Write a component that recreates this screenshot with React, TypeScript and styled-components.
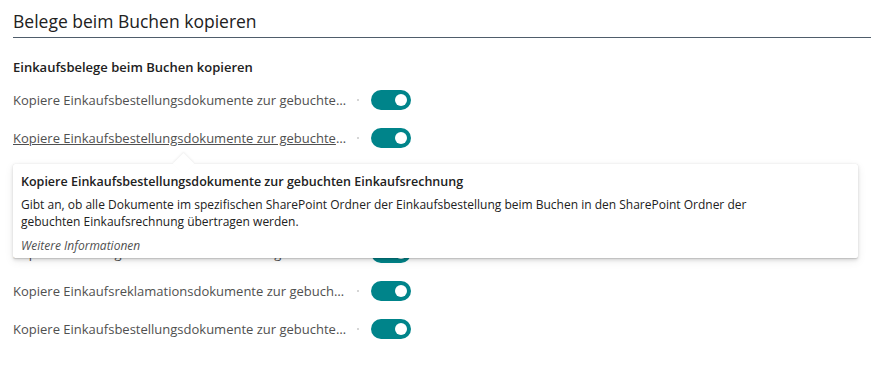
import styled, { createGlobalStyle } from "styled-components";

const GlobalStyle = createGlobalStyle`
  body {
    margin: 0;
    background: #ffffff;
    font-family: "Open Sans", "Noto Sans", sans-serif;
  }
`;

const Page = styled.div`
  padding: 9px 0 0 13px;
  width: 858px;
`;

const Header = styled.h2`
  margin: 0;
  padding-bottom: 4px;
  font-size: 17.5px;
  font-weight: 400;
  color: #212121;
  border-bottom: 1px solid #4f5d6b;
`;

const Group = styled.h3`
  margin: 20px 0 0;
  font-size: 13px;
  font-weight: 600;
  color: #212121;
`;

const List = styled.div`
  margin-top: 5px;
  display: flex;
  flex-direction: column;
`;

const Row = styled.div`
  position: relative;
  display: flex;
  align-items: center;
  height: 38.2px;
`;

const Label = styled.span<{ $hover: boolean }>`
  width: 334px;
  font-size: 13px;
  color: #505050;
  white-space: nowrap;
  overflow: hidden;
  text-overflow: ellipsis;
  text-decoration: ${(p) => (p.$hover ? "underline" : "none")};
`;

const Leader = styled.span`
  width: 2px;
  height: 2px;
  margin: 0 12px 0 10px;
  background: #c8c8c8;
  border-radius: 50%;
`;

const Toggle = styled.span`
  position: relative;
  width: 40px;
  height: 20px;
  border-radius: 10px;
  background: #00848a;
  &::after {
    content: "";
    position: absolute;
    right: 4px;
    top: 4px;
    width: 12px;
    height: 12px;
    border-radius: 50%;
    background: #ffffff;
  }
`;

const Tooltip = styled.div`
  position: absolute;
  top: 45px;
  left: 0;
  width: 845px;
  box-sizing: border-box;
  padding: 9px 8px 4px;
  background: #ffffff;
  border-radius: 2px;
  box-shadow: 0 1.6px 3.6px rgba(0, 0, 0, 0.13), 0 0.3px 0.9px rgba(0, 0, 0, 0.11),
    0 3px 10px rgba(0, 0, 0, 0.08);
  z-index: 5;
  &::before {
    content: "";
    position: absolute;
    top: -8px;
    left: 163px;
    width: 15px;
    height: 15px;
    background: #ffffff;
    transform: rotate(45deg);
    box-shadow: -1px -1px 2px rgba(0, 0, 0, 0.06);
  }
`;

const TipTitle = styled.div`
  position: relative;
  font-size: 12.5px;
  font-weight: 600;
  color: #212121;
  line-height: 17px;
`;

const TipText = styled.div`
  margin-top: 6px;
  max-width: 780px;
  font-size: 12px;
  color: #212121;
  line-height: 17px;
`;

const TipLink = styled.div`
  margin-top: 7px;
  font-size: 12px;
  font-style: italic;
  color: #505050;
  line-height: 17px;
`;

const rows = [
  "Kopiere Einkaufsbestellungsdokumente zur gebuchten Einkaufsrechnung",
  "Kopiere Einkaufsbestellungsdokumente zur gebuchten Einkaufsrechnung",
  "Kopiere Einkaufsbestellungsdokumente zur gebuchten Einkaufslieferung",
  "Kopiere Einkaufsrechnungsdokumente zur gebuchten Einkaufsrechnung",
  "Kopiere Einkaufsgutschriftsdokumente zur gebuchten Einkaufsgutschrift",
  "Kopiere Einkaufsreklamationsdokumente zur gebuchten Rücklieferung",
  "Kopiere Einkaufsbestellungsdokumente zur gebuchten Einkaufslieferung",
];

export default function App() {
  return (
    <Page>
      <GlobalStyle />
      <Header>Belege beim Buchen kopieren</Header>
      <Group>Einkaufsbelege beim Buchen kopieren</Group>
      <List>
        {rows.map((text, i) => (
          <Row key={i}>
            <Label $hover={i === 1}>{text}</Label>
            <Leader />
            <Toggle />
            {i === 1 && (
              <Tooltip>
                <TipTitle>
                  Kopiere Einkaufsbestellungsdokumente zur gebuchten Einkaufsrechnung
                </TipTitle>
                <TipText>
                  Gibt an, ob alle Dokumente im spezifischen SharePoint Ordner der
                  Einkaufsbestellung beim Buchen in den SharePoint Ordner der
                  gebuchten Einkaufsrechnung übertragen werden.
                </TipText>
                <TipLink>Weitere Informationen</TipLink>
              </Tooltip>
            )}
          </Row>
        ))}
      </List>
    </Page>
  );
}
